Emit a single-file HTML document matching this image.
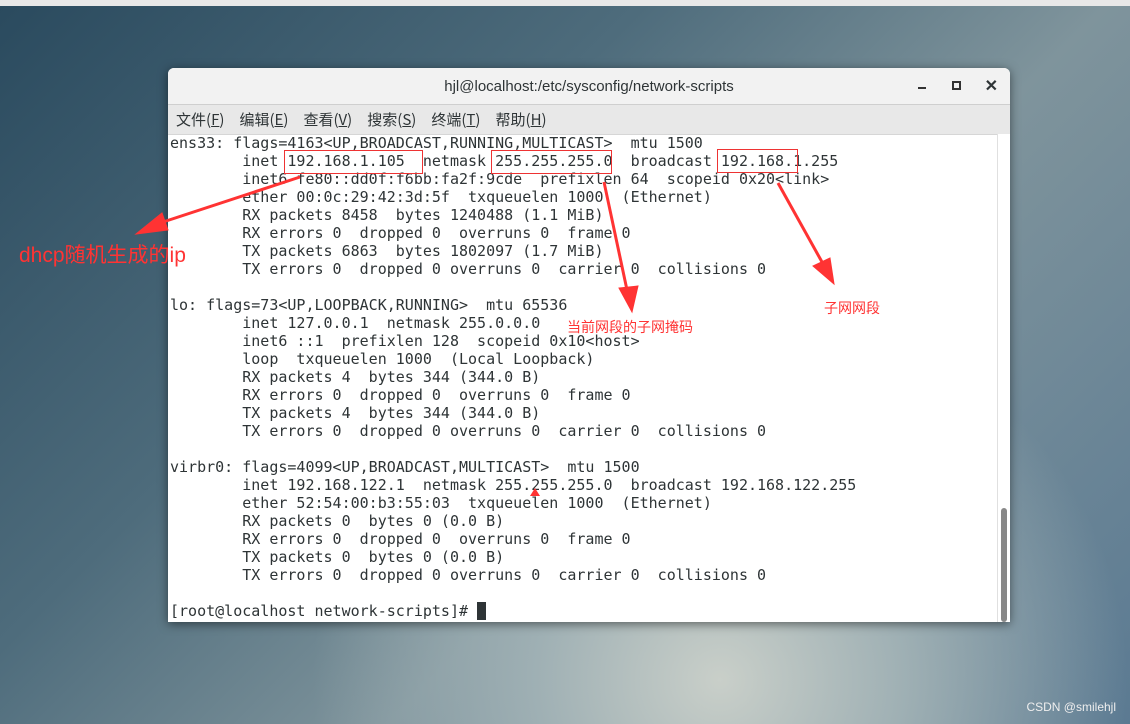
<!DOCTYPE html><html><head><meta charset="utf-8"><style>
body{margin:0;width:1130px;height:724px;overflow:hidden;position:relative;font-family:"Liberation Sans","Noto Sans CJK SC",sans-serif;
background:radial-gradient(ellipse at 720px 680px,#c9cfc9 0,#9fb0b4 18%,transparent 40%),linear-gradient(135deg,#2a4a5e 0%,#4e6c7c 35%,#7f949c 60%,#5b7a92 100%);}
.top{position:absolute;left:0;top:0;width:1130px;height:6px;background:#e8e8e8}
.win{position:absolute;left:168px;top:68px;width:842px;height:554px;background:#fff;border-radius:6px 6px 0 0;overflow:hidden;box-shadow:0 2px 10px rgba(0,0,0,.5)}
.title{height:36px;background:#f2f2f2;border-bottom:1px solid #cfcfcf;text-align:center;line-height:38px;font-size:15px;color:#2e3436}
.menu{height:29px;background:#e8e8e8;border-bottom:1px solid #d6d6d6;font-family:"Noto Sans CJK SC",sans-serif;font-size:15px;color:#2e3436;line-height:29px;padding-left:8px}
.menu span{margin-right:15px}
.term{position:absolute;left:2px;top:66px;margin:0;font-family:"DejaVu Sans Mono",monospace;font-size:15px;line-height:18px;color:#2e3436;white-space:pre}
.sb{position:absolute;right:0;top:66px;width:12px;height:488px;background:#fff;border-left:1px solid #e0e0e0}
.th{position:absolute;right:3px;top:374px;width:6px;height:114px;background:#888;border-radius:3px}
.box{position:absolute;border:1px solid #e33}
.lbl{position:absolute;color:#f33;font-family:"Noto Sans CJK SC",sans-serif}
</style></head><body>
<div class="top"></div>
<div class="win">
<div class="title">hjl@localhost:/etc/sysconfig/network-scripts
<span style="position:absolute;right:12px;top:0;font-size:16px;letter-spacing:0">
<span style="display:inline-block;width:8px;border-bottom:2px solid #333;margin-right:26px;vertical-align:2px"></span><span style="display:inline-block;width:5px;height:5px;border:2px solid #333;margin-right:24px;vertical-align:1px"></span><b>✕</b></span></div>
<div class="menu"><span>文件(<u>F</u>)</span><span>编辑(<u>E</u>)</span><span>查看(<u>V</u>)</span><span>搜索(<u>S</u>)</span><span>终端(<u>T</u>)</span><span>帮助(<u>H</u>)</span></div>
<pre class="term">ens33: flags=4163&lt;UP,BROADCAST,RUNNING,MULTICAST&gt;  mtu 1500
        inet 192.168.1.105  netmask 255.255.255.0  broadcast 192.168.1.255
        inet6 fe80::dd0f:f6bb:fa2f:9cde  prefixlen 64  scopeid 0x20&lt;link&gt;
        ether 00:0c:29:42:3d:5f  txqueuelen 1000  (Ethernet)
        RX packets 8458  bytes 1240488 (1.1 MiB)
        RX errors 0  dropped 0  overruns 0  frame 0
        TX packets 6863  bytes 1802097 (1.7 MiB)
        TX errors 0  dropped 0 overruns 0  carrier 0  collisions 0

lo: flags=73&lt;UP,LOOPBACK,RUNNING&gt;  mtu 65536
        inet 127.0.0.1  netmask 255.0.0.0
        inet6 ::1  prefixlen 128  scopeid 0x10&lt;host&gt;
        loop  txqueuelen 1000  (Local Loopback)
        RX packets 4  bytes 344 (344.0 B)
        RX errors 0  dropped 0  overruns 0  frame 0
        TX packets 4  bytes 344 (344.0 B)
        TX errors 0  dropped 0 overruns 0  carrier 0  collisions 0

virbr0: flags=4099&lt;UP,BROADCAST,MULTICAST&gt;  mtu 1500
        inet 192.168.122.1  netmask 255.255.255.0  broadcast 192.168.122.255
        ether 52:54:00:b3:55:03  txqueuelen 1000  (Ethernet)
        RX packets 0  bytes 0 (0.0 B)
        RX errors 0  dropped 0  overruns 0  frame 0
        TX packets 0  bytes 0 (0.0 B)
        TX errors 0  dropped 0 overruns 0  carrier 0  collisions 0

[root@localhost network-scripts]# <span style="background:#2e3436"> </span></pre>
<div class="sb"><div class="th"></div></div>
</div>
<div class="box" style="left:284px;top:150px;width:137px;height:22px"></div>
<div class="box" style="left:491px;top:150px;width:119px;height:22px"></div>
<div class="box" style="left:717px;top:149px;width:79px;height:22px"></div>
<svg style="position:absolute;left:0;top:0" width="1130" height="724">
<g fill="#f33" stroke="#f33">
<line x1="300" y1="177" x2="160" y2="223" stroke-width="3"/>
<polygon points="136,234 162,213 168,230"/>
<line x1="604" y1="182" x2="627" y2="290" stroke-width="3"/>
<polygon points="632,312 619,288 638,286"/>
<line x1="778" y1="183" x2="822" y2="262" stroke-width="3"/>
<polygon points="834,284 813,266 830,258"/>
<polygon points="535,488 530,496 540,496" stroke="none"/>
</g></svg>
<div class="lbl" style="left:19px;top:239px;font-size:21px;font-family:'Liberation Sans','Noto Sans CJK SC',sans-serif">dhcp随机生成的ip</div>
<div class="lbl" style="left:567px;top:317px;font-size:14px">当前网段的子网掩码</div>
<div class="lbl" style="left:824px;top:298px;font-size:14px">子网网段</div>
<div style="position:absolute;right:14px;bottom:10px;color:#eee;font-size:12px">CSDN @smilehjl</div>
</body></html>
